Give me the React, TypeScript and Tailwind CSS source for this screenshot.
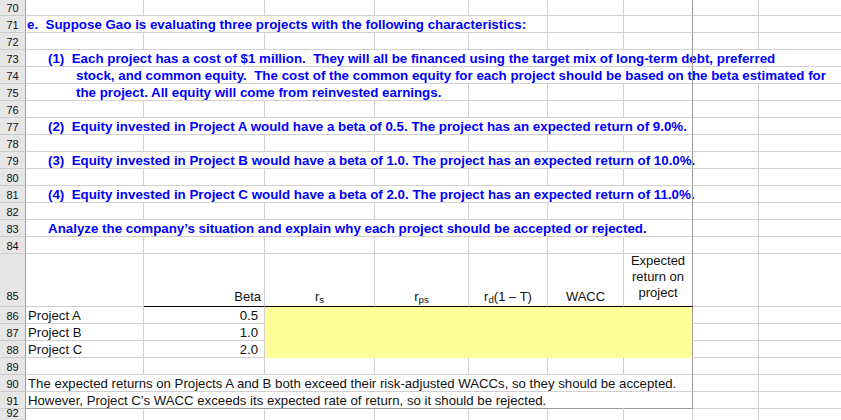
import React from 'react';

type Edge = 'grid' | 'dark' | 'none' | 'black' | 'yellow';

const RIGHT: Record<Edge, string> = {
  grid: 'border-r border-r-[#d0d0d0]',
  dark: 'border-r border-r-[#999999]',
  none: 'border-r border-r-transparent',
  black: 'border-r border-r-black',
  yellow: 'border-r border-r-[#ffff99]',
};
const BOTTOM: Record<Edge, string> = {
  grid: 'border-b border-b-[#d0d0d0]',
  dark: 'border-b border-b-[#999999]',
  none: 'border-b border-b-transparent',
  black: 'border-b border-b-black',
  yellow: 'border-b border-b-[#ffff99]',
};

function Cell({
  w,
  r = 'grid',
  b = 'grid',
  className = '',
  children,
}: {
  w: string;
  r?: Edge;
  b?: Edge;
  className?: string;
  children?: React.ReactNode;
}) {
  return (
    <div className={`${w} shrink-0 h-full flex items-end ${RIGHT[r]} ${BOTTOM[b]} ${className}`}>
      {children}
    </div>
  );
}

function Row({
  n,
  h = 'h-[17px]',
  numPb = 'pb-0',
  children,
}: {
  n: number;
  h?: string;
  numPb?: string;
  children: React.ReactNode;
}) {
  return (
    <div className={`flex ${h}`}>
      <div
        className={`w-[26px] shrink-0 h-full bg-[#e6e6e6] border-r border-r-[#a0a0a0] border-b border-b-[#cccccc] flex items-end justify-center text-[11px] leading-[13px] text-[#111] ${numPb}`}
      >
        {n}
      </div>
      {children}
    </div>
  );
}

function Tail({ gRight = 'dark', hRight = 'grid', from = 'F', b = 'grid' }: { gRight?: Edge; hRight?: Edge; from?: 'E' | 'F' | 'G'; b?: Edge }) {
  return (
    <>
      {from === 'E' && <Cell w="w-[79px]" b={b} />}
      {(from === 'E' || from === 'F') && <Cell w="w-[76px]" b={b} />}
      <Cell w="w-[69px]" r={gRight} b={b} />
      <Cell w="w-[66px]" r={hRight} />
      <Cell w="w-[90px]" />
    </>
  );
}

function EmptyRow({ n, h, gRight = 'dark' }: { n: number; h?: string; gRight?: Edge }) {
  return (
    <Row n={n} h={h}>
      <Cell w="w-[118px]" />
      <Cell w="w-[121px]" />
      <Cell w="w-[110px]" />
      <Cell w="w-[94px]" />
      <Cell w="w-[79px]" />
      <Cell w="w-[76px]" />
      <Cell w="w-[69px]" r={gRight} />
      <Cell w="w-[66px]" />
      <Cell w="w-[90px]" />
    </Row>
  );
}

const blue = 'whitespace-pre font-bold text-[#0000ff] text-[13.33px] leading-[13px] pb-[1px]';
const black = 'whitespace-pre text-[#111] text-[13.2px] leading-[13px] pb-[1px]';

function BlueRow({ n, text, indent, hRight = 'grid' }: { n: number; text: string; indent: string; hRight?: Edge }) {
  return (
    <Row n={n}>
      <Cell w="w-[598px]" r="none">
        <span className={`${blue} ${indent}`}>{text}</span>
      </Cell>
      <Tail from="G" hRight={hRight} />
    </Row>
  );
}

function ProjectRow({ n, name, beta }: { n: number; name: string; beta: string }) {
  return (
    <Row n={n}>
      <Cell w="w-[118px]">
        <span className={`${black} pl-[2px]`}>{name}</span>
      </Cell>
      <Cell w="w-[121px]" className="justify-end">
        <span className={`${black} pr-[6px]`}>{beta}</span>
      </Cell>
      <Cell w="w-[428px]" r="dark" b="yellow" className="bg-[#ffff99]" />
      <Cell w="w-[66px]" />
      <Cell w="w-[90px]" />
    </Row>
  );
}

export default function App() {
  const hdr = 'whitespace-nowrap text-[#111] text-[13px] leading-[13px] pb-[3px]';
  return (
    <div className="w-[841px] h-[420px] overflow-hidden bg-white font-['Liberation_Sans',Arial,sans-serif]">
      <EmptyRow n={70} h="h-[16px]" />
      <Row n={71}>
        <Cell w="w-[522px]">
          <span className={`${blue} pl-[1px]`}>{'e.  Suppose Gao is evaluating three projects with the following characteristics:'}</span>
        </Cell>
        <Tail from="F" />
      </Row>
      <EmptyRow n={72} />
      <BlueRow
        n={73}
        indent="pl-[22px]"
        hRight="none"
        text={'(1)  Each project has a cost of $1 million.  They will all be financed using the target mix of long-term debt, preferred'}
      />
      <BlueRow
        n={74}
        indent="pl-[50px]"
        hRight="none"
        text={'stock, and common equity.  The cost of the common equity for each project should be based on the beta estimated for'}
      />
      <Row n={75}>
        <Cell w="w-[443px]">
          <span className={`${blue} pl-[50px]`}>{'the project. All equity will come from reinvested earnings.'}</span>
        </Cell>
        <Tail from="E" />
      </Row>
      <EmptyRow n={76} />
      <BlueRow n={77} indent="pl-[22px]" text={'(2)  Equity invested in Project A would have a beta of 0.5. The project has an expected return of 9.0%.'} />
      <EmptyRow n={78} />
      <BlueRow n={79} indent="pl-[22px]" text={'(3)  Equity invested in Project B would have a beta of 1.0. The project has an expected return of 10.0%.'} />
      <EmptyRow n={80} />
      <BlueRow n={81} indent="pl-[22px]" text={'(4)  Equity invested in Project C would have a beta of 2.0. The project has an expected return of 11.0%.'} />
      <EmptyRow n={82} />
      <BlueRow n={83} indent="pl-[22px]" text={'Analyze the company\u2019s situation and explain why each project should be accepted or rejected.'} />
      <EmptyRow n={84} />
      <Row n={85} h="h-[53px]" numPb="pb-[3px]">
        <Cell w="w-[118px]" />
        <Cell w="w-[121px]" b="black" className="justify-end">
          <span className={`${hdr} pr-[3px]`}>Beta</span>
        </Cell>
        <Cell w="w-[110px]" b="black" className="justify-center">
          <span className={hdr}>
            r<sub>s</sub>
          </span>
        </Cell>
        <Cell w="w-[94px]" b="black" className="justify-center">
          <span className={hdr}>
            r<sub>ps</sub>
          </span>
        </Cell>
        <Cell w="w-[79px]" b="black" className="justify-center">
          <span className={hdr}>
            r<sub>d</sub>(1 – T)
          </span>
        </Cell>
        <Cell w="w-[76px]" b="black" className="justify-center">
          <span className={hdr}>WACC</span>
        </Cell>
        <Cell w="w-[69px]" r="dark" b="black" className="justify-center overflow-hidden">
          <span className="text-center text-[#111] text-[13px] leading-[16px] pb-[5px] whitespace-nowrap">
            Expected
            <br />
            return on
            <br />
            project
          </span>
        </Cell>
        <Cell w="w-[66px]" />
        <Cell w="w-[90px]" />
      </Row>
      <ProjectRow n={86} name="Project A" beta="0.5" />
      <ProjectRow n={87} name="Project B" beta="1.0" />
      <ProjectRow n={88} name="Project C" beta="2.0" />
      <EmptyRow n={89} />
      <Row n={90}>
        <Cell w="w-[598px]" r="none">
          <span className={`${black} pl-[2px]`}>
            {'The expected returns on Projects A and B both exceed their risk-adjusted WACCs, so they should be accepted.'}
          </span>
        </Cell>
        <Tail from="G" />
      </Row>
      <Row n={91}>
        <Cell w="w-[598px]" r="none" b="dark">
          <span className={`${black} pl-[2px]`}>
            {'However, Project C\u2019s WACC exceeds its expected rate of return, so it should be rejected.'}
          </span>
        </Cell>
        <Tail from="G" b="dark" />
      </Row>
      <EmptyRow n={92} h="h-[12px]" gRight="grid" />
    </div>
  );
}
